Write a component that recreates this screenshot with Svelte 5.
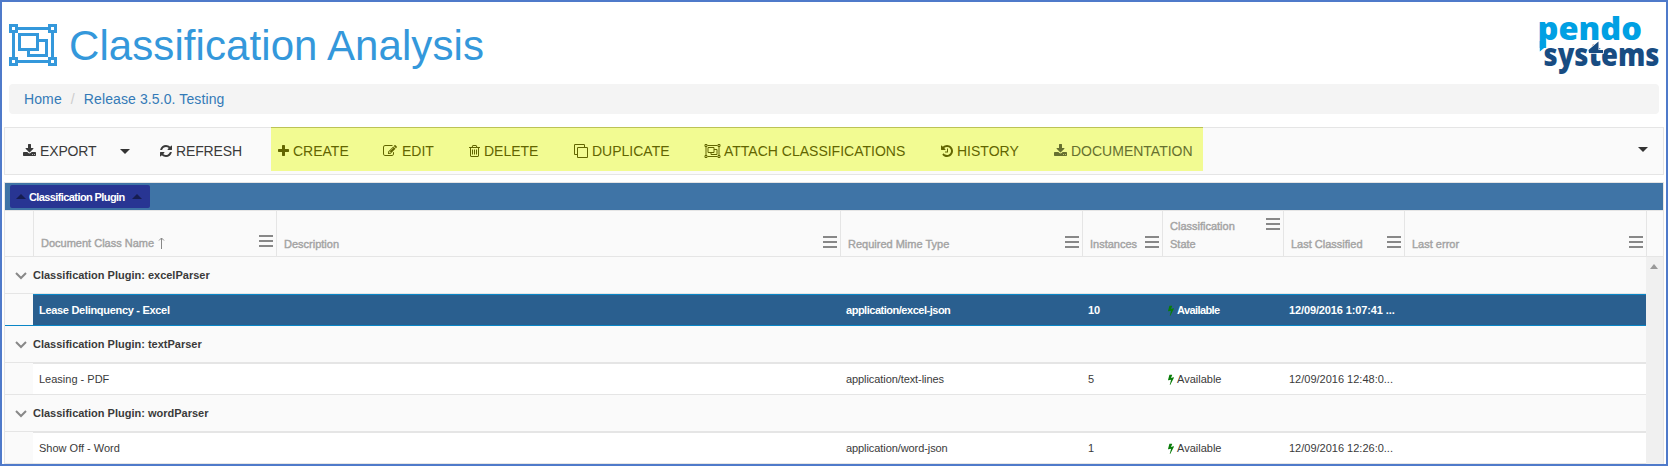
<script>
  const download = 'M1344 1344q0-26-19-45t-45-19-45 19-19 45 19 45 45 19 45-19 19-45zm256 0q0-26-19-45t-45-19-45 19-19 45 19 45 45 19 45-19 19-45zm128-224v320q0 40-28 68t-68 28h-1472q-40 0-68-28t-28-68v-320q0-40 28-68t68-28h465l135 136q58 56 136 56t136-56l136-136h464q40 0 68 28t28 68zm-325-569q17 41-14 70l-448 448q-18 19-45 19t-45-19l-448-448q-31-29-14-70 17-39 59-39h256v-448q0-26 19-45t45-19h256q26 0 45 19t19 45v448h256q42 0 59 39z';
  const icons = {
    download: { x: 64, w: 1664, d: download },
    refresh: { x: 128, w: 1536, d: 'M1639 1056q0 5-1 7-64 268-268 434.5t-478 166.5q-146 0-282.5-55t-243.5-157l-129 129q-19 19-45 19t-45-19-19-45v-448q0-26 19-45t45-19h448q26 0 45 19t19 45-19 45l-137 137q71 66 161 102t187 36q134 0 250-65t186-179q11-17 53-117 8-23 30-23h192q13 0 22.5 9.5t9.5 22.5zm25-800v448q0 26-19 45t-45 19h-448q-26 0-45-19t-19-45 19-45l138-138q-148-137-349-137-134 0-250 65t-186 179q-11 17-53 117-8 23-30 23h-199q-13 0-22.5-9.5t-9.5-22.5v-7q65-268 270-434.5t480-166.5q146 0 284 55.5t245 156.5l130-129q19-19 45-19t45 19 19 45z' },
    plus: { x: 192, w: 1408, d: 'M1600 736v192q0 40-28 68t-68 28h-416v416q0 40-28 68t-68 28h-192q-40 0-68-28t-28-68v-416h-416q-40 0-68-28t-28-68v-192q0-40 28-68t68-28h416v-416q0-40 28-68t68-28h192q40 0 68 28t28 68v416h416q40 0 68 28t28 68z' },
    edit: { x: 0, w: 1792, d: 'M888 1184l116-116-152-152-116 116v56h96v96h56zm440-720q-16-16-33 1l-350 350q-17 17-1 33t33-1l350-350q17-17 1-33zm80 594v190q0 119-84.5 203.5t-203.5 84.5h-832q-119 0-203.5-84.5t-84.5-203.5v-832q0-119 84.5-203.5t203.5-84.5h832q63 0 117 25 15 7 18 23 3 17-9 29l-49 49q-14 14-32 8-23-6-45-6h-832q-66 0-113 47t-47 113v832q0 66 47 113t113 47h832q66 0 113-47t47-113v-126q0-13 9-22l64-64q15-15 35-7t20 29zm-96-738l288 288-672 672h-288v-288zm444 132l-92 92-288-288 92-92q28-28 68-28t68 28l152 152q28 28 28 68t-28 68z' },
    trash: { x: 192, w: 1408, d: 'M704 736v576q0 14-9 23t-23 9h-64q-14 0-23-9t-9-23v-576q0-14 9-23t23-9h64q14 0 23 9t9 23zm256 0v576q0 14-9 23t-23 9h-64q-14 0-23-9t-9-23v-576q0-14 9-23t23-9h64q14 0 23 9t9 23zm256 0v576q0 14-9 23t-23 9h-64q-14 0-23-9t-9-23v-576q0-14 9-23t23-9h64q14 0 23 9t9 23zm128 724v-948h-896v948q0 22 7 40.5t14.5 27 10.5 8.5h832q3 0 10.5-8.5t14.5-27 7-40.5zm-672-1076h448l-48-117q-7-9-17-11h-317q-10 2-17 11zm928 32v64q0 14-9 23t-23 9h-96v948q0 83-47 143.5t-113 60.5h-832q-66 0-113-58.5t-47-141.5v-952h-96q-14 0-23-9t-9-23v-64q0-14 9-23t23-9h309l70-167q15-37 54-63t79-26h320q40 0 79 26t54 63l70 167h309q14 0 23 9t9 23z' },
    clone: { x: 0, w: 1792, d: 'M160 0h1088q66 0 113 47t47 113v224h224q66 0 113 47t47 113v1088q0 66-47 113t-113 47H544q-66 0-113-47t-47-113v-224H160q-66 0-113-47T0 1248V160Q0 94 47 47T160 0zM128 160v1088q0 32 32 32h224V544q0-66 47-113t113-47h736V160q0-32-32-32H160q-32 0-32 32zM512 544v1088q0 32 32 32h1088q32 0 32-32V544q0-32-32-32H544q-32 0-32 32z' },
    history: { x: 128, w: 1536, d: 'M1664 896q0 156-61 298t-164 245-245 164-298 61q-172 0-327-72.5t-264-204.5q-7-10-6.5-22.5t8.5-20.5l137-138q10-9 25-9 16 2 23 12 73 95 179 147t225 52q104 0 198.5-40.5t163.5-109.5 109.5-163.5 40.5-198.5-40.5-198.5-109.5-163.5-163.5-109.5-198.5-40.5q-98 0-188 35.5t-160 101.5l137 138q31 30 14 69-17 40-59 40h-448q-26 0-45-19t-19-45v-448q0-42 40-59 39-17 69 14l130 129q107-101 244.5-156.5t284.5-55.5q156 0 298 61t245 164 164 245 61 298zm-640-288v448q0 14-9 23t-23 9h-320q-14 0-23-9t-9-23v-64q0-14 9-23t23-9h224v-352q0-14 9-23t23-9h64q14 0 23 9t9 23z' }
  };
  const bolt = 'M1333 566q18 20 7 44l-540 1157q-13 25-42 25-4 0-14-2-17-5-25.5-19t-4.5-30l197-808-406 101q-4 1-12 1-18 0-31-11-18-15-13-39l201-825q4-16 17-26t31-10h328q19 0 32 12.5t13 29.5q0 8-5 18l-171 463 396-98q8-2 12-2 19 0 34 15z';

  // slot: width of the button, lead: width kept for the icon in front of the label
  const actions = [
    { icon: 'plus', label: 'CREATE', slot: 105, lead: 15 },
    { icon: 'edit', label: 'EDIT', slot: 86, lead: 19 },
    { icon: 'trash', label: 'DELETE', slot: 105, lead: 15 },
    { icon: 'clone', label: 'DUPLICATE', slot: 130, lead: 18 },
    { icon: 'group', label: 'ATTACH CLASSIFICATIONS', slot: 237, lead: 20 },
    { icon: 'history', label: 'HISTORY', slot: 113, lead: 16 },
    { icon: 'download', label: 'DOCUMENTATION', slot: 145, lead: 17 }
  ];
  const columns = ['Document Class Name', 'Description', 'Required Mime Type', 'Instances', 'Classification State', 'Last Classified', 'Last error'];
  const groups = [
    { plugin: 'excelParser', name: 'Lease Delinquency - Excel', mime: 'application/excel-json', count: 10, date: '12/09/2016 1:07:41 ...', selected: true },
    { plugin: 'textParser', name: 'Leasing - PDF', mime: 'application/text-lines', count: 5, date: '12/09/2016 12:48:0...' },
    { plugin: 'wordParser', name: 'Show Off - Word', mime: 'application/word-json', count: 1, date: '12/09/2016 12:26:0...' }
  ];
</script>

{#snippet groupIcon(w, h)}
  <svg width={w} height={h} viewBox="0 0 48 42" fill="none" stroke="currentColor" stroke-width="3">
    <path d="M9 4.5H39M9 37.5H39M4.5 9V33M43.5 9V33" />
    <path d="M1.5 1.5H7.5V7.5H1.5ZM40.5 1.5H46.5V7.5H40.5ZM1.5 34.5H7.5V40.5H1.5ZM40.5 34.5H46.5V40.5H40.5Z" />
    <path d="M10.5 10.5H28.5V25.5H10.5ZM28.5 16.5H37.5V31.5H19.5V25.5" />
  </svg>
{/snippet}

{#snippet fa(name)}
  {#if name === 'group'}
    {@render groupIcon(17, 14)}
  {:else}
    <svg width={icons[name].w / 128} height="14" viewBox="{icons[name].x} 0 {icons[name].w} 1792" fill="currentColor"><path fill-rule="evenodd" d={icons[name].d} /></svg>
  {/if}
{/snippet}

<div class="page">
  <header>
    {@render groupIcon(48, 42)}
    <h1>Classification Analysis</h1>
    <svg class="logo" width="124" height="62" viewBox="0 0 124 62">
      <text x="-1.5" y="28.8" fill="#00a0e3" textLength="104.5" lengthAdjust="spacingAndGlyphs">pendo</text>
      <path d="M0.8 30H6.4V36L0.8 40.5Z" fill="#00a0e3" />
      <text class="sys" x="4.5" y="55.3" fill="#184c82" textLength="116" lengthAdjust="spacingAndGlyphs">systems</text>
      <path d="M49.5 39L59.5 30.5V39H64V42H50Z" fill="#184c82" stroke="#fff" stroke-width="1.6" paint-order="stroke" />
    </svg>
  </header>

  <nav><a href="#home">Home</a><span>/</span><a href="#release">Release 3.5.0. Testing</a></nav>

  <div class="toolbar">
    <button class="export"><i style:width="17px">{@render fa('download')}</i>EXPORT</button>
    <button class="drop" aria-label="Export options"><svg width="10" height="5" viewBox="0 0 10 5"><path d="M0 0H10L5 5Z" fill="#333" /></svg></button>
    <button class="refresh"><i style:width="16px">{@render fa('refresh')}</i>REFRESH</button>
    <div class="marked">
      {#each actions as a}
        <button class:doc={a.label === 'DOCUMENTATION'} style:width="{a.slot}px"><i style:width="{a.lead}px">{@render fa(a.icon)}</i>{a.label}</button>
      {/each}
    </div>
    <button class="more" aria-label="More"><svg width="10" height="5" viewBox="0 0 10 5"><path d="M0 0H10L5 5Z" fill="#333" /></svg></button>
  </div>

  <section class="grid">
    <div class="groupbar">
      <div class="pill">
        <svg width="10" height="5" viewBox="0 0 10 5"><path d="M0 5H10L5 0Z" /></svg>
        <span>Classification Plugin</span>
        <svg width="10" height="5" viewBox="0 0 10 5"><path d="M0 5H10L5 0Z" /></svg>
      </div>
    </div>
    <div class="cols head">
      <div></div>
      {#each columns as c, n}
        <div class="th" class:first={n === 0} class:wrap={n === 4}>
          <span>{c}</span>
          {#if n === 0}<svg class="sort" width="7" height="12" viewBox="0 0 7 12"><path d="M3.5 12V1M1 3.5L3.5 1L6 3.5" fill="none" stroke="#888" /></svg>{/if}
          <b class="menu"></b>
        </div>
      {/each}
      <div></div>
    </div>
    <div class="body">
      <div class="rows">
        {#each groups as g}
          <div class="group">
            <svg width="12" height="8" viewBox="0 0 12 8"><path d="M1 1L6 6L11 1" fill="none" stroke="#888" stroke-width="2" /></svg>
            <span>Classification Plugin: {g.plugin}</span>
          </div>
          <div class="cols row" class:selected={g.selected}>
            <div class="indent"></div>
            <div class="name">{g.name}</div>
            <div></div>
            <div class="mime">{g.mime}</div>
            <div>{g.count}</div>
            <div class="state"><svg width="6" height="11" viewBox="448 0 900 1792" preserveAspectRatio="none"><path d={bolt} fill="#0a7d0a" /></svg>Available</div>
            <div class="date">{g.date}</div>
            <div></div>
          </div>
        {/each}
      </div>
      <div class="scroll"><svg width="8" height="5" viewBox="0 0 8 5"><path d="M0 5H8L4 0Z" fill="#999" /></svg></div>
    </div>
  </section>
</div>

<style>
  .page {
    box-sizing: border-box;
    width: 1668px;
    height: 466px;
    border: 2px solid #4f7aca;
    background: #fff;
    overflow: hidden;
    font-family: "Liberation Sans", Arial, sans-serif;
    color: #3a3a3a;
  }
  svg { display: block; flex: none; }
  header {
    display: flex;
    align-items: flex-start;
    height: 82px;
    padding: 0 7px;
    box-sizing: border-box;
    color: #3498db;
  }
  header > svg:first-child { margin-top: 22px; }
  h1 {
    margin: 21px 0 0 12px;
    font-size: 42px;
    line-height: 46px;
    font-weight: 400;
    letter-spacing: 0.08px;
  }
  .logo { margin: 9px -4px 0 auto; font: 800 31px "Open Sans", sans-serif; overflow: visible; }
  .sys { stroke: #fff; stroke-width: 2px; paint-order: stroke; }
  nav {
    display: flex;
    height: 30px;
    margin: 0 7px;
    padding-left: 15px;
    border-radius: 4px;
    background: #f4f4f4;
    font-size: 14px;
    line-height: 30px;
    letter-spacing: 0.11px;
  }
  nav a { color: #337ab7; text-decoration: none; }
  nav span { color: #ccc; padding: 0 9px; }
  .toolbar {
    display: flex;
    box-sizing: border-box;
    height: 48px;
    margin: 13px 2px 0 2px;
    border: 1px solid #e5e5e5;
    background: #fafafa;
  }
  button {
    display: flex;
    align-items: center;
    flex: none;
    box-sizing: border-box;
    height: 46px;
    padding: 0;
    border: 0;
    background: none;
    font: 14px/16px "Liberation Sans", Arial, sans-serif;
    color: #3a3a3a;
    white-space: nowrap;
  }
  button i { flex: none; }
  .export { width: 97px; margin-left: 18px; letter-spacing: -0.15px; }
  .drop { width: 40px; }
  .refresh { width: 111px; letter-spacing: -0.15px; }
  .marked {
    display: flex;
    box-sizing: border-box;
    width: 932px;
    height: 44px;
    margin-top: -1px;
    padding-left: 7px;
    border-top: 1px solid #bcc356;
    background: #f2fb92;
  }
  .marked button { color: #626500; }
  .marked button.doc { color: #66702f; }
  .more { margin: 0 15px 0 auto; height: 42px; }
  .grid {
    margin: 7px 2px 0 2px;
    border: 1px solid #e5e5e5;
    border-bottom: 0;
    font-size: 11px;
  }
  .groupbar {
    display: flex;
    height: 27px;
    padding: 2px 5px;
    box-sizing: border-box;
    background: #3f74a6;
  }
  .pill {
    display: flex;
    align-items: center;
    width: 140px;
    height: 23px;
    padding: 0 8px 0 6px;
    box-sizing: border-box;
    border-radius: 2px;
    background: #283593;
    color: #fff;
    font-weight: 700;
    letter-spacing: -0.6px;
    white-space: nowrap;
  }
  .pill span { margin: 0 auto 0 3px; }
  .pill svg { fill: #161d51; }
  .cols {
    display: grid;
    grid-template-columns: 28px 243px 564px 242px 80px 121px 121px 242px 1fr;
  }
  .head {
    height: 47px;
    box-sizing: border-box;
    border: solid #e5e5e5;
    border-width: 1px 0;
    background: #fafafa;
    color: #a3a3a3;
  }
  .th {
    display: flex;
    align-items: flex-end;
    box-sizing: border-box;
    padding: 0 3px 0 7px;
    border-left: 1px solid #e5e5e5;
    line-height: 18px;
    -webkit-text-stroke: 0.4px currentColor;
  }
  .head > div:last-child { border-left: 1px solid #e5e5e5; }
  .th span { padding-bottom: 3px; }
  .first span { padding-bottom: 4px; }
  .sort { margin: 0 0 7px 4px; }
  .menu {
    flex: none;
    width: 14px;
    height: 12px;
    margin: 0 0 8px auto;
    background: linear-gradient(#888 2px, transparent 2px 5px, #888 5px 7px, transparent 7px 10px, #888 10px);
  }
  .first .menu { margin-bottom: 9px; }
  .wrap .menu { margin-bottom: 26px; }
  .wrap span { width: 70px; }
  .body { display: flex; }
  .rows { width: 1641px; flex: none; }
  .scroll { flex: 1; padding: 7px 0 0 4px; background: #f0f0f0; }
  .group {
    display: flex;
    align-items: center;
    height: 37px;
    box-sizing: border-box;
    border-bottom: 1px solid #e5e5e5;
    background: #fafafa;
    font-weight: 700;
  }
  .group svg { margin: 1px 6px 0 10px; }
  .row {
    height: 32px;
    box-sizing: border-box;
    border-bottom: 1px solid #e5e5e5;
    grid-template-columns: 28px 243px 564px 242px 80px 121px 121px 242px;
    line-height: 30px;
  }
  .row div { border-top: 1px solid #e5e5e5; padding-left: 6px; white-space: nowrap; background: #fff; }
  .row .indent { background: #fafafa; border-top-color: #fafafa; padding: 0; }
  .row .state { display: flex; align-items: center; gap: 3px; }
  .row .mime { letter-spacing: -0.08px; }
  .selected { border-color: #0a86c6; font-weight: 700; color: #fff; }
  .selected div:not(.indent) { background: #2a5f8f; border-top-color: #0a86c6; }
  .selected .name { letter-spacing: -0.3px; }
  .selected .mime { letter-spacing: -0.48px; }
  .selected .state { letter-spacing: -0.6px; }
  .selected .date { letter-spacing: -0.12px; }
</style>
